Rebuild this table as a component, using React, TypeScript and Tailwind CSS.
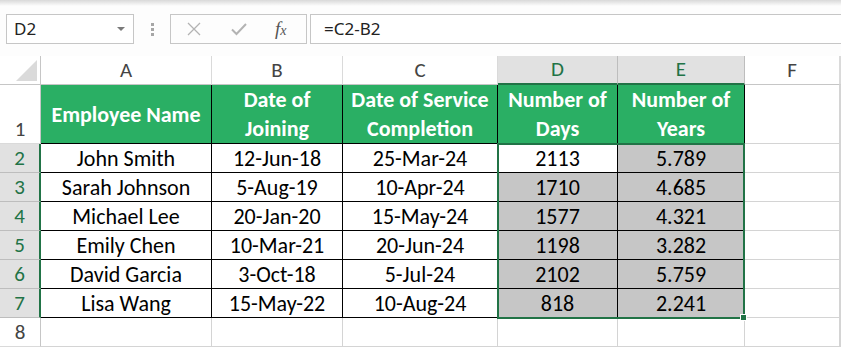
import React from "react";

const rows = [
  ["John Smith", "12-Jun-18", "25-Mar-24", "2113", "5.789"],
  ["Sarah Johnson", "5-Aug-19", "10-Apr-24", "1710", "4.685"],
  ["Michael Lee", "20-Jan-20", "15-May-24", "1577", "4.321"],
  ["Emily Chen", "10-Mar-21", "20-Jun-24", "1198", "3.282"],
  ["David Garcia", "3-Oct-18", "5-Jul-24", "2102", "5.759"],
  ["Lisa Wang", "15-May-22", "10-Aug-24", "818", "2.241"],
];

const headers = [
  ["Employee Name"],
  ["Date of", "Joining"],
  ["Date of Service", "Completion"],
  ["Number of", "Days"],
  ["Number of", "Years"],
];

const letters = ["A", "B", "C", "D", "E", "F", ""];

function ColHeader({ label, active }: { label: string; active: boolean }) {
  if (active) {
    return (
      <div className="flex items-end justify-center border-r border-b-2 border-r-[#bdbdbd] border-b-[#217346] bg-[#e1e1e1] pb-[2px] leading-[24px] text-[#217346]">
        {label}
      </div>
    );
  }
  return (
    <div className="flex items-end justify-center border-r border-b border-r-[#dadada] border-b-[#c6c6c6] bg-white pb-[2px] leading-[24px] text-[#444]">
      {label}
    </div>
  );
}

function RowHeader({ n, active }: { n: number; active: boolean }) {
  if (active) {
    return (
      <div className="flex items-end justify-center border-r-2 border-b border-r-[#217346] border-b-[#bdbdbd] bg-[#e1e1e1] pb-[1px] leading-[26px] text-[#217346]">
        {n}
      </div>
    );
  }
  return (
    <div className="flex items-end justify-center border-r border-b border-r-[#c6c6c6] border-b-[#dadada] bg-white pb-[1px] leading-[26px] text-[#444]">
      {n}
    </div>
  );
}

function Blank() {
  return <div className="border-r border-b border-[#d4d4d4] bg-white" />;
}

export default function App() {
  return (
    <div
      className="h-[350px] w-[841px] overflow-hidden bg-white"
      style={{ fontFamily: "Carlito, Lato, 'Liberation Sans', sans-serif" }}
    >
      {/* formula bar */}
      <div className="relative h-[56px] bg-[#fdfdfd]">
        <div className="h-[6px] bg-gradient-to-b from-[#d9d9d9] to-[#fdfdfd]" />
        <div
          className="flex items-center pt-[8px] text-[16px] text-[#222]"
          style={{ fontFamily: "'Noto Sans', 'Open Sans', sans-serif" }}
        >
          <div className="ml-[6px] flex h-[30px] w-[128px] items-center justify-between border border-[#c6c6c6] bg-white pl-[7px] pr-[8px]">
            <span className="text-[17px]">D2</span>
            <svg width="8" height="5" viewBox="0 0 8 5">
              <path d="M0 0 L8 0 L4 4 Z" fill="#7a7a7a" />
            </svg>
          </div>
          <div className="ml-[17px] flex flex-col gap-[2px]">
            <div className="h-[3px] w-[3px] bg-[#a6a6a6]" />
            <div className="h-[3px] w-[3px] bg-[#a6a6a6]" />
            <div className="h-[3px] w-[3px] bg-[#a6a6a6]" />
          </div>
          <div className="ml-[16px] flex h-[30px] w-[137px] items-center border border-[#c6c6c6] bg-[#fdfdfd]">
            <svg className="ml-[16px]" width="14" height="14" viewBox="0 0 14 14">
              <path d="M1 1 L13 13 M13 1 L1 13" stroke="#b3b3b3" strokeWidth="1.3" />
            </svg>
            <svg className="ml-[30px]" width="16" height="14" viewBox="0 0 16 14">
              <path d="M1 7.5 L5.5 12 L15 2" stroke="#b3b3b3" strokeWidth="2" fill="none" />
            </svg>
            <span
              className="ml-[28px] italic text-[#555]"
              style={{ fontFamily: "'Liberation Serif', serif" }}
            >
              <span className="text-[19px]">f</span>
              <span className="text-[14px]">x</span>
            </span>
          </div>
          <div className="ml-[3px] flex h-[30px] flex-1 items-center border border-r-0 border-[#c6c6c6] bg-white pl-[13px] text-[17px]">
            =C2-B2
          </div>
        </div>
      </div>

      {/* sheet */}
      <div className="relative">
        <div className="grid grid-cols-[41px_171px_131px_155px_120px_127px_95px_1fr] grid-rows-[29px_59px_repeat(7,29px)_1fr] text-[21px]">
          {/* corner */}
          <div className="relative border-r border-b border-r-[#c6c6c6] border-b-[#c6c6c6] bg-white">
            <svg className="absolute bottom-[3px] right-[3px]" width="21" height="21" viewBox="0 0 21 21">
              <path d="M21 0 L21 21 L0 21 Z" fill="#dadada" />
            </svg>
          </div>
          {letters.map((l, i) => (
            <ColHeader key={i} label={l} active={i === 3 || i === 4} />
          ))}

          {/* row 1 */}
          <RowHeader n={1} active={false} />
          {headers.map((h, i) => (
            <div
              key={i}
              className="flex flex-col items-center justify-center border-r border-b border-black bg-[#2aaf64] text-[22px] font-bold leading-[29px] text-white"
            >
              {h.map((line, j) => (
                <span key={j}>{line}</span>
              ))}
            </div>
          ))}
          <Blank />
          <Blank />

          {/* data rows */}
          {rows.map((r, ri) => (
            <React.Fragment key={ri}>
              <RowHeader n={ri + 2} active={true} />
              {r.map((v, ci) => (
                <div
                  key={ci}
                  className={
                    ci >= 3 && !(ri === 0 && ci === 3)
                      ? "flex items-center justify-center border-r border-b border-black bg-[#c6c6c6] pt-[1px] text-[22px] leading-[28px] text-black"
                      : "flex items-center justify-center border-r border-b border-black bg-white pt-[1px] text-[22px] leading-[28px] text-black"
                  }
                >
                  {v}
                </div>
              ))}
              <Blank />
              <Blank />
            </React.Fragment>
          ))}

          {/* row 8 */}
          <RowHeader n={8} active={false} />
          {[0, 1, 2, 3, 4, 5, 6].map((i) => (
            <Blank key={i} />
          ))}

          {/* row 9 (cut off) */}
          <div className="border-r border-r-[#c6c6c6] bg-white" />
          {[0, 1, 2, 3, 4, 5, 6].map((i) => (
            <div key={i} className="border-r border-[#d4d4d4] bg-white" />
          ))}
        </div>

        {/* selection D2:E7 */}
        <div className="pointer-events-none absolute left-[497px] top-[87px] h-[176px] w-[248px] border-2 border-[#217346]" />
        <div className="pointer-events-none absolute left-[740px] top-[258px] h-[7px] w-[7px] border border-white bg-[#217346]" />
      </div>
    </div>
  );
}
